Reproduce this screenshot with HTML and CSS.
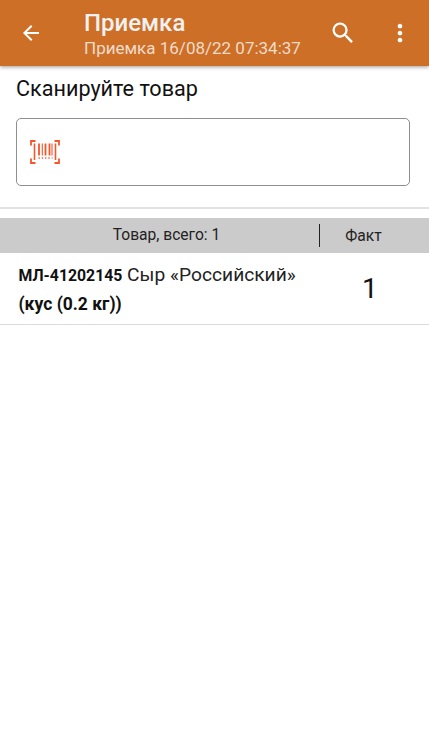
FILE: index.html
```html
<!DOCTYPE html>
<html>
    <head>
        <meta name='viewport' content='width=device-width, initial-scale=1.0'>
        <title>Приемка</title>
        <link rel="stylesheet" href="styles.css">
    </head>
    <body>
        <header class="bar">
            <svg class="back" width="24" height="24" viewBox="0 0 24 24"><path d="M20 11H7.83l5.59-5.59L12 4l-8 8 8 8 1.41-1.41L7.83 13H20z"/></svg>
            <div class="titles">
                <div class="title">Приемка</div>
                <div class="subtitle">Приемка 16/08/22 07:34:37</div>
            </div>
            <svg class="search" width="28" height="28" viewBox="0 0 24 24"><path d="M15.5 14h-.79l-.28-.27A6.47 6.47 0 0 0 16 9.5 6.5 6.5 0 1 0 9.5 16c1.61 0 3.09-.59 4.23-1.57l.27.28v.79l5 4.99L20.49 19l-4.99-5zm-6 0C7.01 14 5 11.99 5 9.5S7.01 5 9.5 5 14 7.01 14 9.5 11.99 14 9.5 14z"/></svg>
            <svg class="more" width="28" height="28" viewBox="0 0 24 24"><path d="M12 8c1.1 0 2-.9 2-2s-.9-2-2-2-2 .9-2 2 .9 2 2 2zm0 2c-1.1 0-2 .9-2 2s.9 2 2 2 2-.9 2-2-.9-2-2-2zm0 6c-1.1 0-2 .9-2 2s.9 2 2 2 2-.9 2-2-.9-2-2-2z"/></svg>
        </header>
        <div class="prompt">Сканируйте товар</div>
        <div class="scan">
            <svg width="30" height="24" viewBox="0 0 30 24" fill="none" stroke="#f4562c">
                <path stroke-width="1.800" d="M5.500 1H1v4.500M24.500 1H29v4.500M1 18.500V23h4.500M29 18.500V23h-4.500"/>
                <path stroke-width="1.600" d="M4.500 3.500v16.500M25.500 3.500v16.500"/>
                <path stroke-width="1.800" d="M9 3.500v12M15.500 3.500v12M19.500 3.500v12"/>
                <path stroke-width="1.100" d="M12.300 3.500v12M22 3.500v12"/>
                <path stroke-width="1.300" stroke-dasharray="1.300 2" d="M8.500 18h14"/>
            </svg>
        </div>
        <div class="divider"></div>
        <div class="thead">
            <div class="thead-name">Товар, всего: 1</div>
            <div class="thead-fact">Факт</div>
        </div>
        <div class="row">
            <div class="row-name"><b>МЛ-41202145</b> Сыр «Российский»<br><b class="pack">(кус (0.2 кг))</b></div>
            <div class="row-fact">1</div>
        </div>
    </body>
</html>
```

FILE: styles.css
```css
body {
    margin: 0;
    background: #fff;
    font-family: Roboto, sans-serif;
    color: #1a1a1a;
}
.bar {
    height: 66px;
    background: #cd6f27;
    display: flex;
    align-items: center;
    box-shadow: 0 1px 4px rgba(0, 0, 0, 0.4);
}
.bar svg {
    fill: #fff;
    flex: none;
}
.back {
    margin-left: 19px;
}
.titles {
    margin-left: 41px;
    flex: 1;
    padding-top: 1px;
}
.title {
    font-size: 24px;
    font-weight: 500;
    line-height: 28px;
    color: #f1f1f1;
}
.subtitle {
    font-size: 17px;
    line-height: 22px;
    color: #f0dccb;
}
.search {
    margin-right: 29px;
}
.more {
    margin-right: 15px;
}
.prompt {
    font-size: 21.600px;
    line-height: 24px;
    margin: 11px 16px 0;
    color: #111;
}
.scan {
    height: 66px;
    margin: 17px 19px 0 16px;
    border: 1px solid #8f8f8f;
    border-radius: 5px;
    display: flex;
    align-items: center;
    padding-left: 13px;
}
.divider {
    height: 2px;
    margin-top: 21px;
    background: #e2e2e2;
}
.thead {
    height: 35px;
    margin-top: 9px;
    background: #cbcbcb;
    display: flex;
    align-items: center;
    font-size: 15.600px;
    color: #222;
}
.thead-name {
    width: 320px;
    height: 23px;
    line-height: 23px;
    text-align: center;
    border-right: 1.500px solid #222;
    box-sizing: border-box;
    padding-left: 14px;
}
.thead-fact {
    flex: 1;
    text-align: center;
    padding-right: 22px;
}
.row {
    height: 71px;
    border-bottom: 1px solid #dcdcdc;
    display: flex;
    align-items: center;
}
.row-name {
    width: 310px;
    margin-left: 18.500px;
    padding-top: 1px;
    font-size: 19.200px;
    line-height: 28px;
    color: #222;
}
.row-name b {
    font-size: 15.800px;
    font-weight: 700;
    color: #111;
}
.row-name .pack {
    font-size: 17.500px;
}
.row-fact {
    flex: 1;
    text-align: center;
    font-size: 28px;
    font-weight: 400;
    color: #111;
    padding-right: 18px;
}
```
